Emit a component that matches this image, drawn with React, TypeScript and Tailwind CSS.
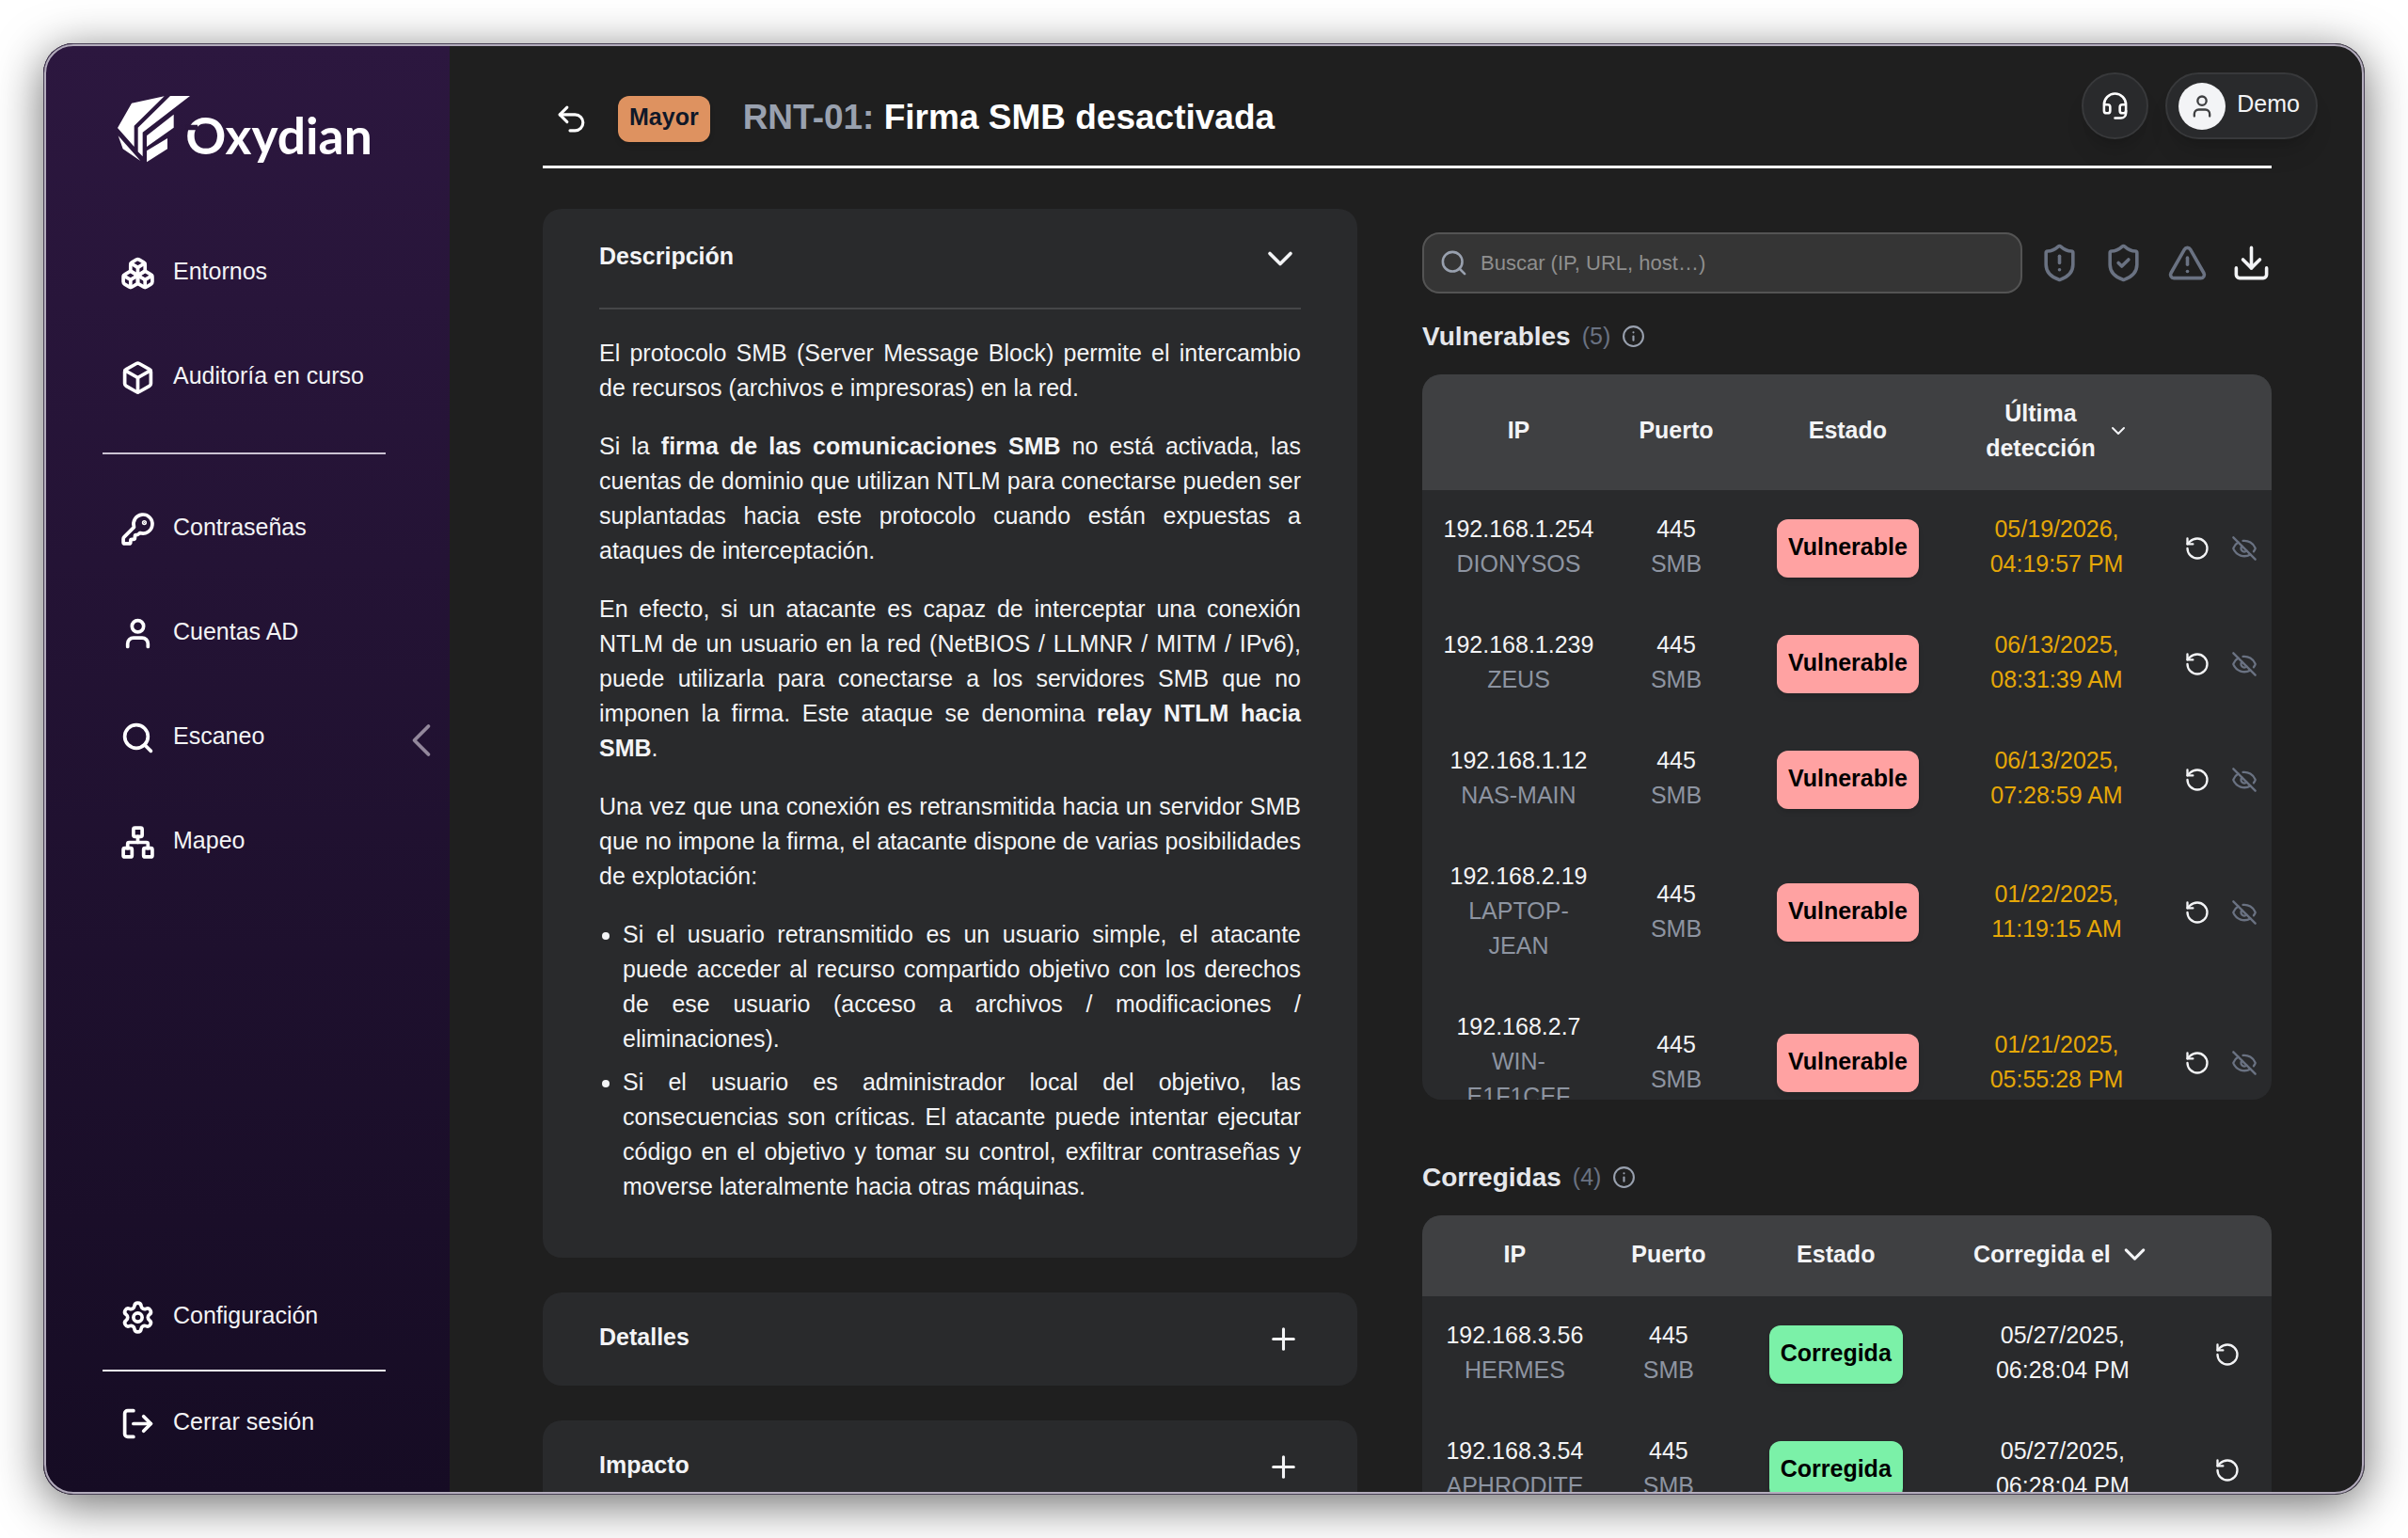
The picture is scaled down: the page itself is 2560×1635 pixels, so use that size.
import React from "react"
import {
  Box,
  Boxes,
  ChevronDown,
  ChevronLeft,
  Download,
  EyeOff,
  Headset,
  Info,
  KeyRound,
  LogOut,
  LucideIcon,
  Network,
  Plus,
  RotateCcw,
  Search,
  Settings,
  ShieldAlert,
  ShieldCheck,
  TriangleAlert,
  Undo2,
  User,
} from "lucide-react"

type Host = {
  ip: string
  name: string
  date: string
  time: string
}

const vulnerables: Host[] = [
  { ip: "192.168.1.254", name: "DIONYSOS", date: "05/19/2026,", time: "04:19:57 PM" },
  { ip: "192.168.1.239", name: "ZEUS", date: "06/13/2025,", time: "08:31:39 AM" },
  { ip: "192.168.1.12", name: "NAS-MAIN", date: "06/13/2025,", time: "07:28:59 AM" },
  { ip: "192.168.2.19", name: "LAPTOP-JEAN", date: "01/22/2025,", time: "11:19:15 AM" },
  { ip: "192.168.2.7", name: "WIN-E1F1CEF", date: "01/21/2025,", time: "05:55:28 PM" },
]

const corregidas: Host[] = [
  { ip: "192.168.3.56", name: "HERMES", date: "05/27/2025,", time: "06:28:04 PM" },
  { ip: "192.168.3.54", name: "APHRODITE", date: "05/27/2025,", time: "06:28:04 PM" },
]

const Logo: React.FC = () => (
  <svg
    viewBox="45 36 834 234"
    className="w-[278px] overflow-visible"
    role="img"
    aria-label="Oxydian"
  >
    <g fill="#fff">
      <path d="M90 59 194 37 98 131V198L45 138Z" />
      <path d="M213 36H276L125 152V229L110 214V137Z" />
      <path d="M224 95V137L138 198V163Z" />
      <path d="M204 171V205L138 247V211Z" />
      <path d="M47 163 118 243 62 205Z" />
      <text x="262" y="221" fontFamily="Lato, sans-serif" fontWeight="700" fontSize="160">
        Oxydian
      </text>
    </g>
    <path d="M262 128H300V145H262Z" fill="#2a163c" />
  </svg>
)

const NavItem: React.FC<{ icon: LucideIcon; label: string }> = ({ icon: Icon, label }) => (
  <li>
    <a href="#" className="flex h-[111px] items-center gap-[19px] pl-[82px]">
      <Icon size={37} strokeWidth={2.4} className="text-white" />
      <span className="pb-1">{label}</span>
    </a>
  </li>
)

const Sidebar: React.FC = () => (
  <aside className="relative flex w-[432px] shrink-0 flex-col bg-linear-to-b from-[#2c173f] to-[#160c24] pb-5 text-gray-100">
    <div className="h-[189px] pt-14 pl-[79px]">
      <Logo />
    </div>
    <nav className="flex grow flex-col justify-between">
      <ul>
        <NavItem icon={Boxes} label="Entornos" />
        <NavItem icon={Box} label="Auditoría en curso" />
        <li className="mr-[68px] ml-[63px] py-6">
          <hr className="border-t-2 border-[#cbc3d3]" />
        </li>
        <NavItem icon={KeyRound} label="Contraseñas" />
        <NavItem icon={User} label="Cuentas AD" />
        <NavItem icon={Search} label="Escaneo" />
        <NavItem icon={Network} label="Mapeo" />
      </ul>
      <ul>
        <NavItem icon={Settings} label="Configuración" />
        <li className="mr-[68px] ml-[63px]">
          <hr className="border-t-2 border-gray-100" />
        </li>
        <NavItem icon={LogOut} label="Cerrar sesión" />
      </ul>
    </nav>
    <button
      type="button"
      aria-label="Contraer menú"
      className="absolute top-[48%] right-0 -translate-y-1/2 text-[#93889c]"
    >
      <ChevronLeft size={60} strokeWidth={1.5} />
    </button>
  </aside>
)

const UserMenu: React.FC = () => (
  <div className="absolute top-[31px] right-[50px] flex gap-[18px]">
    <button
      type="button"
      aria-label="Soporte"
      className="flex size-[71px] items-center justify-center rounded-full border-2 border-[#38393b] bg-[#292a2c] text-white shadow-xl"
    >
      <Headset size={31} />
    </button>
    <button
      type="button"
      className="flex h-[71px] items-center gap-[12px] rounded-full border-2 border-[#38393b] bg-[#292a2c] pr-[17px] pl-[12px] text-gray-100 shadow-xl"
    >
      <span className="flex size-[50px] items-center justify-center rounded-full bg-gray-100 text-[#3f4042]">
        <User size={28} />
      </span>
      <span className="pb-1">Demo</span>
    </button>
  </div>
)

const Panel: React.FC<{ title: string; children?: React.ReactNode }> = ({ title, children }) => (
  <section className="rounded-[20px] bg-[#292a2c] px-[60px]">
    <h2>
      <button
        type="button"
        aria-expanded={!!children}
        className={`flex w-full items-center justify-between font-bold ${children ? "h-[105px]" : "h-[99px]"}`}
      >
        <span className="pb-1">{title}</span>
        {children ? <ChevronDown size={44} /> : <Plus size={37} />}
      </button>
    </h2>
    {children}
  </section>
)

const Description: React.FC = () => (
  <div className="flex flex-col gap-[25px] border-t-2 border-[#454648] pt-7 pb-[57px] text-justify">
    <p>
      El protocolo SMB (Server Message Block) permite el intercambio de recursos (archivos e
      impresoras) en la red.
    </p>
    <p>
      Si la <strong>firma de las comunicaciones SMB</strong> no está activada, las cuentas de
      dominio que utilizan NTLM para conectarse pueden ser suplantadas hacia este protocolo cuando
      están expuestas a ataques de interceptación.
    </p>
    <p>
      En efecto, si un atacante es capaz de interceptar una conexión NTLM de un usuario en la red
      (NetBIOS / LLMNR / MITM / IPv6), puede utilizarla para conectarse a los servidores SMB que no
      imponen la firma. Este ataque se denomina <strong>relay NTLM hacia SMB</strong>.
    </p>
    <p>
      Una vez que una conexión es retransmitida hacia un servidor SMB que no impone la firma, el
      atacante dispone de varias posibilidades de explotación:
    </p>
    <ul className="flex list-disc flex-col gap-[9px] pl-[25px]">
      <li>
        Si el usuario retransmitido es un usuario simple, el atacante puede acceder al recurso
        compartido objetivo con los derechos de ese usuario (acceso a archivos / modificaciones /
        eliminaciones).
      </li>
      <li>
        Si el usuario es administrador local del objetivo, las consecuencias son críticas. El
        atacante puede intentar ejecutar código en el objetivo y tomar su control, exfiltrar
        contraseñas y moverse lateralmente hacia otras máquinas.
      </li>
    </ul>
  </div>
)

const Toolbar: React.FC = () => (
  <div className="flex items-center gap-[18px]">
    <label className="flex h-[65px] grow items-center gap-[13px] rounded-[18px] border-2 border-[#545454] bg-[#353535] px-4">
      <Search size={31} className="shrink-0 text-gray-400" />
      <input
        type="search"
        aria-label="Buscar"
        placeholder="Buscar (IP, URL, host…)"
        className="w-full bg-transparent text-[22px] outline-none placeholder:text-[#8f8f8f]"
      />
    </label>
    <div className="flex shrink-0 gap-[25px] text-gray-500">
      <button type="button" aria-label="Vulnerables">
        <ShieldAlert size={43} />
      </button>
      <button type="button" aria-label="Corregidas">
        <ShieldCheck size={43} />
      </button>
      <button type="button" aria-label="Riesgo aceptado">
        <TriangleAlert size={43} />
      </button>
      <button type="button" aria-label="Descargar" className="text-gray-100">
        <Download size={43} />
      </button>
    </div>
  </div>
)

const SectionTitle: React.FC<{ title: string; count: number }> = ({ title, count }) => (
  <div className="mb-[19px] flex h-[43px] items-center gap-3">
    <h2 className="text-[28px] font-bold text-gray-200">{title}</h2>
    <span className="text-gray-500">({count})</span>
    <Info size={25} className="text-gray-400" />
  </div>
)

const HostCells: React.FC<{ host: Host }> = ({ host }) => (
  <>
    <td className="px-5 pt-[23px] pb-[26px]">
      {host.ip}
      <div className="text-[#8d94a1]">{host.name}</div>
    </td>
    <td className="pb-[3px]">
      445
      <div className="text-[#8d94a1]">SMB</div>
    </td>
  </>
)

const RescanButton: React.FC = () => (
  <button type="button" aria-label="Volver a escanear">
    <RotateCcw size={28} />
  </button>
)

const VulnerableTable: React.FC = () => (
  <div className="max-h-[771px] overflow-hidden rounded-[20px] bg-[#292a2c]">
    <table className="w-full table-fixed text-center">
      <thead className="h-[123px] bg-[#3f4042]">
        <tr>
          <th className="w-[22.7%] pb-1">IP</th>
          <th className="w-[14.4%] pb-1">Puerto</th>
          <th className="w-[26%] pb-1">Estado</th>
          <th className="w-[23.2%] pb-1">
            <button type="button" className="inline-flex items-center gap-[10px]">
              <span className="w-[120px]">Última detección</span>
              <ChevronDown size={24} />
            </button>
          </th>
          <th aria-label="Acciones" />
        </tr>
      </thead>
      <tbody>
        {vulnerables.map((host) => (
          <tr key={host.ip}>
            <HostCells host={host} />
            <td>
              <span className="inline-block rounded-xl bg-red-300 px-3 pt-[11px] pb-[14px] font-bold text-black shadow-md">
                Vulnerable
              </span>
            </td>
            <td className="pb-[3px] text-[#e5a708]">
              {host.date}
              <br />
              {host.time}
            </td>
            <td>
              <div className="flex justify-end gap-[22px] pr-[15px]">
                <RescanButton />
                <button type="button" aria-label="Ocultar" className="text-gray-500">
                  <EyeOff size={28} />
                </button>
              </div>
            </td>
          </tr>
        ))}
      </tbody>
    </table>
  </div>
)

const FixedTable: React.FC = () => (
  <div className="max-h-[771px] overflow-hidden rounded-[20px] bg-[#292a2c]">
    <table className="w-full table-fixed text-center">
      <thead className="h-[86px] bg-[#3f4042]">
        <tr>
          <th className="w-[21.8%] pb-1">IP</th>
          <th className="w-[14.4%] pb-1">Puerto</th>
          <th className="w-[25%] pb-1">Estado</th>
          <th className="w-[28.4%] pb-1">
            <button type="button" className="inline-flex items-center gap-[7px]">
              Corregida el
              <ChevronDown size={37} />
            </button>
          </th>
          <th aria-label="Acciones" />
        </tr>
      </thead>
      <tbody>
        {corregidas.map((host) => (
          <tr key={host.ip}>
            <HostCells host={host} />
            <td>
              <span className="inline-block rounded-xl bg-[#7bf1a8] px-3 pt-[11px] pb-[14px] font-bold text-black shadow-md">
                Corregida
              </span>
            </td>
            <td className="pb-[3px]">
              {host.date}
              <br />
              {host.time}
            </td>
            <td>
              <div className="flex justify-center">
                <RescanButton />
              </div>
            </td>
          </tr>
        ))}
      </tbody>
    </table>
  </div>
)

export default function App() {
  return (
    <div className="h-screen bg-white p-[46px] font-['Liberation_Sans',Arial,sans-serif] text-[25px] leading-[37px] text-gray-100">
      <div className="relative flex h-full overflow-hidden rounded-[32px] bg-[#1f1f1f] shadow-[0_10px_50px_rgba(0,0,0,0.58)]">
        <Sidebar />
        <main className="min-w-0 grow px-[99px]">
          <header className="flex items-center gap-[31px] border-b-3 border-white pt-14 pb-[25px] pl-3">
            <button type="button" aria-label="Volver" className="text-white">
              <Undo2 size={37} />
            </button>
            <span className="rounded-xl bg-[#de9260] px-3 pt-1 pb-2 font-bold text-gray-900 shadow-md">
              Mayor
            </span>
            <h1 className="pb-1 pl-1 text-[37px] font-bold text-white">
              <span className="text-gray-400">RNT-01:</span> Firma SMB desactivada
            </h1>
          </header>
          <div className="mt-[43px] grid grid-cols-[minmax(0,866fr)_minmax(0,903fr)] gap-[69px]">
            <div className="flex flex-col gap-[37px]">
              <Panel title="Descripción">
                <Description />
              </Panel>
              <Panel title="Detalles" />
              <Panel title="Impacto" />
            </div>
            <div className="pt-[25px]">
              <Toolbar />
              <div className="mt-6">
                <SectionTitle title="Vulnerables" count={5} />
                <VulnerableTable />
              </div>
              <div className="mt-[61px]">
                <SectionTitle title="Corregidas" count={4} />
                <FixedTable />
              </div>
            </div>
          </div>
        </main>
        <UserMenu />
        <div className="pointer-events-none absolute inset-0 rounded-[32px] border border-[#4b4358]">
          <div className="h-full rounded-[31px] border-2 border-[#b4adbd]" />
        </div>
      </div>
    </div>
  )
}
